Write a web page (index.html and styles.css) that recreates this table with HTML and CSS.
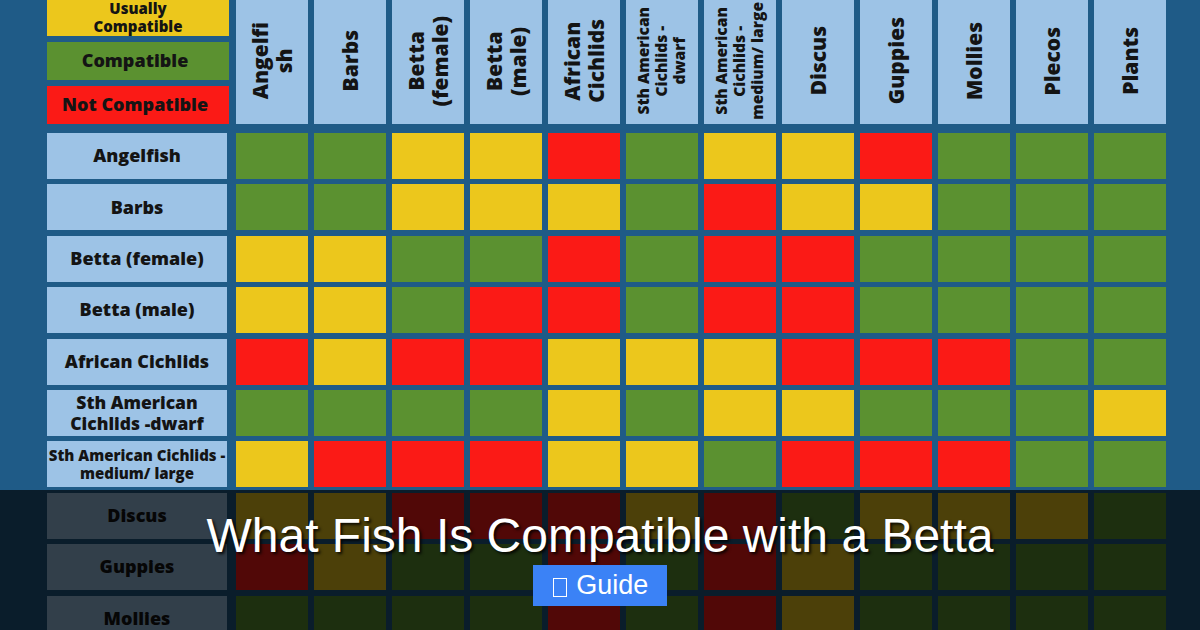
FILE: index.html
```html
<!DOCTYPE html>
<html lang="en">
<head>
<meta charset="utf-8">
<title>What Fish Is Compatible with a Betta</title>
<link rel="stylesheet" href="styles.css">
</head>
<body>
<div class="chart">
  <div class="head">
    <div class="legend">
      <div class="leg leg-y"><span>Usually<br>Compatible</span></div>
      <div class="leg leg-g"><span>Compatible</span></div>
      <div class="leg leg-r"><span>Not Compatible</span></div>
    </div>
    <div class="hcell"><span>Angelfi<br>sh</span></div>
    <div class="hcell"><span>Barbs</span></div>
    <div class="hcell"><span>Betta<br>(female)</span></div>
    <div class="hcell"><span>Betta<br>(male)</span></div>
    <div class="hcell"><span>African<br>Cichlids</span></div>
    <div class="hcell small"><span>Sth American<br>Cichlids -<br>dwarf</span></div>
    <div class="hcell small"><span>Sth American<br>Cichlids -<br>medium/ large</span></div>
    <div class="hcell"><span>Discus</span></div>
    <div class="hcell"><span>Guppies</span></div>
    <div class="hcell"><span>Mollies</span></div>
    <div class="hcell"><span>Plecos</span></div>
    <div class="hcell"><span>Plants</span></div>
  </div>
  <div class="rows">
    <div class="label">Angelfish</div>
    <div class="c g"></div><div class="c g"></div><div class="c y"></div><div class="c y"></div><div class="c r"></div><div class="c g"></div><div class="c y"></div><div class="c y"></div><div class="c r"></div><div class="c g"></div><div class="c g"></div><div class="c g"></div>

    <div class="label">Barbs</div>
    <div class="c g"></div><div class="c g"></div><div class="c y"></div><div class="c y"></div><div class="c y"></div><div class="c g"></div><div class="c r"></div><div class="c y"></div><div class="c y"></div><div class="c g"></div><div class="c g"></div><div class="c g"></div>

    <div class="label">Betta (female)</div>
    <div class="c y"></div><div class="c y"></div><div class="c g"></div><div class="c g"></div><div class="c r"></div><div class="c g"></div><div class="c r"></div><div class="c r"></div><div class="c g"></div><div class="c g"></div><div class="c g"></div><div class="c g"></div>

    <div class="label">Betta (male)</div>
    <div class="c y"></div><div class="c y"></div><div class="c g"></div><div class="c r"></div><div class="c r"></div><div class="c g"></div><div class="c r"></div><div class="c r"></div><div class="c g"></div><div class="c g"></div><div class="c g"></div><div class="c g"></div>

    <div class="label">African Cichlids</div>
    <div class="c r"></div><div class="c y"></div><div class="c r"></div><div class="c r"></div><div class="c y"></div><div class="c y"></div><div class="c y"></div><div class="c r"></div><div class="c r"></div><div class="c r"></div><div class="c g"></div><div class="c g"></div>

    <div class="label label-2">Sth American<br>Cichlids -dwarf</div>
    <div class="c g"></div><div class="c g"></div><div class="c g"></div><div class="c g"></div><div class="c y"></div><div class="c g"></div><div class="c y"></div><div class="c y"></div><div class="c g"></div><div class="c g"></div><div class="c g"></div><div class="c y"></div>

    <div class="label label-sm">Sth American Cichlids -<br>medium/ large</div>
    <div class="c y"></div><div class="c r"></div><div class="c r"></div><div class="c r"></div><div class="c y"></div><div class="c y"></div><div class="c g"></div><div class="c r"></div><div class="c r"></div><div class="c r"></div><div class="c g"></div><div class="c g"></div>

    <div class="label">Discus</div>
    <div class="c y"></div><div class="c y"></div><div class="c r"></div><div class="c r"></div><div class="c r"></div><div class="c y"></div><div class="c r"></div><div class="c g"></div><div class="c y"></div><div class="c y"></div><div class="c y"></div><div class="c g"></div>

    <div class="label">Guppies</div>
    <div class="c r"></div><div class="c y"></div><div class="c g"></div><div class="c g"></div><div class="c r"></div><div class="c g"></div><div class="c r"></div><div class="c y"></div><div class="c g"></div><div class="c g"></div><div class="c g"></div><div class="c g"></div>

    <div class="label">Mollies</div>
    <div class="c g"></div><div class="c g"></div><div class="c g"></div><div class="c g"></div><div class="c r"></div><div class="c g"></div><div class="c r"></div><div class="c y"></div><div class="c g"></div><div class="c g"></div><div class="c g"></div><div class="c g"></div>
  </div>
</div>
<div class="overlay">
  <h1 class="title">What Fish Is Compatible with a Betta</h1>
  <span class="badge"><span class="tofu" aria-hidden="true"></span> Guide</span>
</div>
</body>
</html>
```
FILE: styles.css
```css
html, body {
  margin: 0;
  padding: 0;
}
body {
  width: 1200px;
  height: 630px;
  overflow: hidden;
  position: relative;
  background: #1f5b87;
  font-family: "Open Sans", "Noto Sans", sans-serif;
  color: #141414;
}
.chart {
  margin: -2px 0 0 47px;
  width: 1119px;
}
.head {
  display: grid;
  grid-template-columns: 183.5px repeat(12, 1fr);
  column-gap: 5.5px;
  height: 126px;
}
.legend {
  display: flex;
  flex-direction: column;
  gap: 6px;
  width: 182px;
}
.leg {
  flex: 1;
  display: flex;
  align-items: center;
  justify-content: center;
  text-align: center;
  font-weight: 800;
  font-size: 18px;
  line-height: 1.2;
}
.leg-g span, .leg-r span {
  margin-right: 6px;
}
.leg-y {
  background: #ecc71c;
  font-size: 15px;
  line-height: 1.2;
}
.leg-g { background: #5b9130; }
.leg-r { background: #fb1a16; }
.hcell {
  background: #9dc3e6;
  display: flex;
  align-items: center;
  justify-content: center;
}
.hcell span {
  writing-mode: vertical-rl;
  transform: rotate(180deg);
  text-align: center;
  font-weight: 800;
  font-size: 21px;
  line-height: 1.15;
}
.hcell.small span {
  font-size: 15.5px;
  line-height: 1.15;
}
.rows {
  margin-top: 9px;
  display: grid;
  grid-template-columns: 183.5px repeat(12, 1fr);
  grid-auto-rows: 46px;
  column-gap: 5.5px;
  row-gap: 5.4px;
}
.label {
  width: 180px;
  background: #9dc3e6;
  display: flex;
  align-items: center;
  justify-content: center;
  text-align: center;
  font-weight: 800;
  font-size: 18px;
  line-height: 1.2;
}
.label-2 {
  font-size: 17.5px;
  line-height: 1.2;
}
.label-sm {
  font-size: 15px;
  line-height: 1.25;
  white-space: nowrap;
}
.c.g { background: #5b9130; }
.c.y { background: #ecc71c; }
.c.r { background: #fb1a16; }
.overlay {
  position: absolute;
  left: 0;
  right: 0;
  bottom: 0;
  height: 140px;
  box-sizing: border-box;
  padding-top: 17px;
  background: rgba(0, 0, 0, 0.68);
  display: flex;
  flex-direction: column;
  align-items: center;
}
.title {
  margin: 0;
  font-family: "Liberation Sans", Arial, sans-serif;
  font-weight: 400;
  font-size: 48px;
  line-height: 1.2;
  color: #fff;
  text-shadow: 2px 2px 3px rgba(0, 0, 0, 0.85);
}
.badge {
  background: #3b82f6;
  color: #fff;
  font-family: "Liberation Sans", Arial, sans-serif;
  font-size: 27px;
  line-height: 31px;
  padding: 5px 19px;
}
.tofu {
  display: inline-block;
  width: 14px;
  height: 19px;
  box-sizing: border-box;
  border: 1.5px solid #fff;
  vertical-align: -3px;
  margin: 0 2px 0 1px;
}
```
